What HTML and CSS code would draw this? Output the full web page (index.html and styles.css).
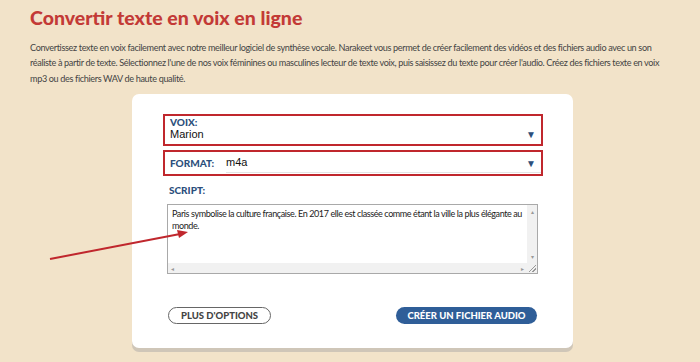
FILE: index.html
```html
<!DOCTYPE html>
<html lang="fr">
<head>
  <meta charset="UTF-8">
  <title>Convertir texte en voix en ligne</title>
  <link rel="stylesheet" href="styles.css">
</head>
<body>

  <div class="page">
    <h1 class="title">Convertir texte en voix en ligne</h1>
    <p class="intro">Convertissez texte en voix facilement avec notre meilleur logiciel de synthèse vocale. Narakeet vous permet de créer facilement des vidéos et des fichiers audio avec un son réaliste à partir de texte. Sélectionnez l'une de nos voix féminines ou masculines lecteur de texte voix, puis saisissez du texte pour créer l'audio. Créez des fichiers texte en voix mp3 ou des fichiers WAV de haute qualité.</p>

    <div class="card">
      <div class="field voice">
        <div class="label">VOIX:</div>
        <div class="value">Marion</div>
        <span class="caret">&#9660;</span>
      </div>

      <div class="field format">
        <div class="label">FORMAT:</div>
        <div class="value">m4a</div>
        <span class="caret">&#9660;</span>
      </div>

      <div class="label script-label">SCRIPT:</div>
      <div class="script">
        <div class="script-body">
          <div class="script-text">Paris symbolise la culture française. En 2017 elle est classée comme étant la ville la plus élégante au monde.</div>
          <div class="vbar"><span>&#9652;</span><span>&#9662;</span></div>
        </div>
        <div class="hbar"><span>&#9666;</span><span>&#9656;</span><i class="grip"></i></div>
      </div>

      <div class="actions">
        <button class="btn btn-outline">PLUS D'OPTIONS</button>
        <button class="btn btn-primary">CRÉER UN FICHIER AUDIO</button>
      </div>
    </div>
  </div>

  <svg class="pointer" width="700" height="362" viewBox="0 0 700 362">
    <line x1="50" y1="259" x2="180" y2="234" stroke="#c0272d" stroke-width="2"/>
    <polygon points="188,232 177,230 179,238" fill="#c0272d"/>
  </svg>

</body>
</html>
```

FILE: styles.css
```css
* { box-sizing: border-box; margin: 0; padding: 0; }
body {
  background: #f2e3c9;
  font-family: Lato, sans-serif;
  color: #3d3d3d;
  width: 700px;
  height: 362px;
  overflow: hidden;
  position: relative;
}
.page { padding: 5px 0 0 30px; }
.title {
  font-family: Lato, sans-serif;
  font-weight: 900;
  font-size: 19.5px;
  color: #c33a36;
  line-height: 26px;
}
.intro {
  margin-top: 9px;
  width: 645px;
  font-size: 9.1px;
  letter-spacing: -0.35px;
  line-height: 15.4px;
  color: #444;
}
.card {
  width: 441px;
  margin: 8px 0 0 102px;
  background: #fff;
  border-radius: 7px;
  padding: 20px 31px 24px 31px;
  box-shadow: 0 4px 0 #cfc6b8;
}
.field {
  position: relative;
  border: 2px solid #c0272d;
  width: 380px;
  padding: 0 0 0 5px;
}
.voice { height: 32px; padding-top: 1px; }
.format {
  height: 26px;
  margin-top: 4px;
  display: flex;
  align-items: center;
}
.label {
  font-family: Lato, sans-serif;
  font-weight: 900;
  font-size: 10px;
  color: #2d4f7c;
  line-height: 11px;
}
.value {
  font-family: "Liberation Sans", Arial, sans-serif;
  font-size: 11px;
  color: #111;
  line-height: 13px;
}
.format .label { width: 56px; }
.format .value {
  flex: 1;
  border-bottom: 1px solid #e4e4e4;
  padding-bottom: 3px;
  margin-top: 3px;
}
.caret {
  position: absolute;
  right: 5px;
  font-size: 10px;
  color: #2d4f7c;
}
.voice .caret { top: 12px; }
.format .caret { top: 5px; }
.script-label { margin: 9px 0 0 6px; }
.script {
  margin: 8px 0 0 4px;
  width: 371px;
  height: 70px;
  border: 1px solid #a9a9a9;
  display: flex;
  flex-direction: column;
}
.script-body { flex: 1; display: flex; }
.script-text {
  flex: 1;
  padding: 3px 4px;
  font-size: 9px;
  letter-spacing: -0.4px;
  line-height: 12px;
  color: #222;
}
.vbar {
  width: 10px;
  background: #f1f1f1;
  display: flex;
  flex-direction: column;
  justify-content: space-between;
  align-items: center;
  font-size: 6px;
  color: #999;
  padding: 3px 0;
}
.hbar {
  height: 10px;
  background: #f1f1f1;
  display: flex;
  justify-content: space-between;
  align-items: center;
  font-size: 6px;
  color: #999;
  padding: 0 13px 0 3px;
  position: relative;
}
.grip {
  position: absolute;
  right: 1px;
  bottom: 1px;
  width: 7px;
  height: 7px;
  background: linear-gradient(135deg, transparent 45%, #999 45%, #999 55%, transparent 55%, transparent 70%, #999 70%, #999 80%, transparent 80%);
}
.actions {
  display: flex;
  justify-content: space-between;
  margin: 33px 5px 0 5px;
}
.btn {
  font-family: Lato, sans-serif;
  font-weight: 900;
  font-size: 9.5px;
  height: 17px;
  border-radius: 9px;
  white-space: nowrap;
  cursor: pointer;
}
.btn-outline {
  background: #fff;
  color: #444;
  border: 1px solid #666;
  width: 103px;
}
.btn-primary {
  background: #2f5e98;
  color: #fff;
  border: none;
  width: 141px;
}
.pointer {
  position: absolute;
  left: 0;
  top: 0;
  pointer-events: none;
}
```
